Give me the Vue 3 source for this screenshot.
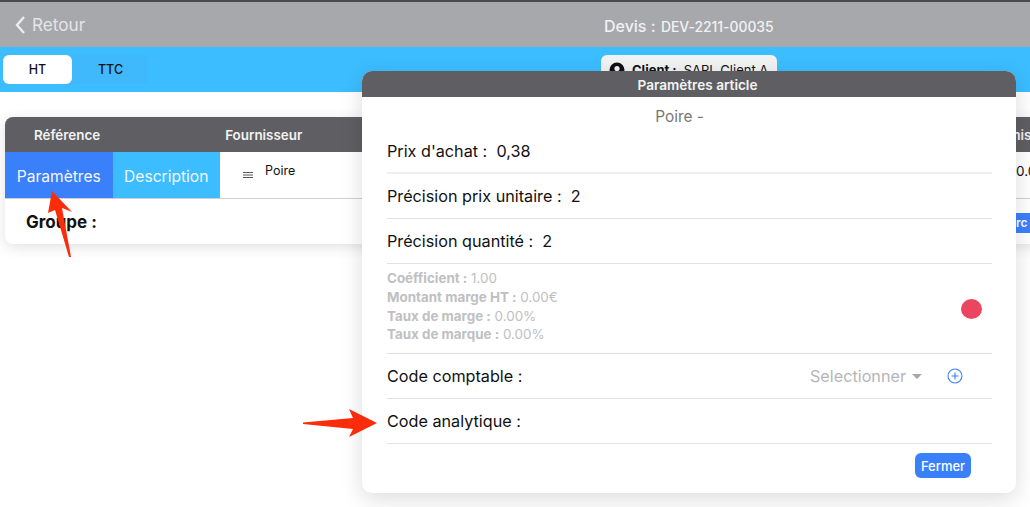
<template>
  <div class="page">
    <header class="nav">
      <div class="back">
        <svg width="12" height="20" viewBox="0 0 12 20"><path d="M10 2 L3 10 L10 18" fill="none" stroke="#eceded" stroke-width="2.4"/></svg>
        <span>Retour</span>
      </div>
      <div class="title">Devis : <small>DEV-2211-00035</small></div>
    </header>
    <div class="bar">
      <div class="toggle">
        <button class="seg on">HT</button>
        <button class="seg">TTC</button>
      </div>
      <div class="client">
        <svg width="16" height="18" viewBox="0 0 16 18"><circle cx="8" cy="8" r="7.5" fill="#111"/><circle cx="8" cy="6.5" r="2.6" fill="#f1f2f4"/></svg>
        <b>Client :</b> <span>SARL Client A</span>
      </div>
    </div>
    <section class="card">
      <div class="thead">
        <span class="th1">Référence</span>
        <span class="th2">Fournisseur</span>
        <span class="th3">Remis</span>
      </div>
      <div class="trow">
        <div class="tab blue">Paramètres</div>
        <div class="tab sky">Description</div>
        <div class="name">
          <svg width="10" height="6" viewBox="0 0 10 6"><path d="M0 .5h10M0 3h10M0 5.5h10" stroke="#555" stroke-width="1"/></svg>
          <span>Poire</span>
        </div>
        <span class="val">0.00</span>
      </div>
      <div class="group">
        <b>Groupe :</b>
        <span class="more">Marc</span>
      </div>
    </section>

    <div class="modal">
      <div class="mhead">Paramètres article</div>
      <div class="msub">Poire -</div>
      <div class="mbody">
        <div class="line">Prix d'achat :&nbsp; 0,38</div>
        <div class="line">Précision prix unitaire :&nbsp; 2</div>
        <div class="line">Précision quantité :&nbsp; 2</div>
        <div class="stats">
          <div class="nums">
            <p v-for="s in stats" :key="s[0]"><b>{{ s[0] }} :</b> {{ s[1] }}</p>
          </div>
          <i class="dot"></i>
        </div>
        <div class="line">
          <span>Code comptable :</span>
          <span class="select">Selectionner<i class="caret"></i></span>
          <svg class="plus" width="16" height="16" viewBox="0 0 16 16"><circle cx="8" cy="8" r="7" fill="none" stroke="#3a80f6" stroke-width="1.1"/><path d="M8 4.5v7M4.5 8h7" stroke="#3a80f6" stroke-width="1.1"/></svg>
        </div>
        <div class="line">Code analytique :</div>
      </div>
      <div class="mfoot"><button class="close">Fermer</button></div>
    </div>

    <svg class="arrow a1" width="30" height="70" viewBox="0 0 30 70"><path d="M7 1 L27 22 L17 18 L26 67 L24 67 L10 20 L3 23 Z" fill="#fb2c0a"/></svg>
    <svg class="arrow a2" width="76" height="30" viewBox="0 0 76 30"><path d="M75 15 L47 29 L51 21 L1 16 L1 14.5 L51 10 L47 1 Z" fill="#fb2c0a"/></svg>
  </div>
</template>

<script setup>
const stats = [
  ['Coéfficient', '1.00'],
  ['Montant marge HT', '0.00€'],
  ['Taux de marge', '0.00%'],
  ['Taux de marque', '0.00%'],
]
</script>

<style>
html, body { margin: 0; background: #fff; }
</style>

<style scoped>
.page { position: relative; width: 1030px; height: 507px; overflow: hidden; font-family: Inter, "Liberation Sans", sans-serif; font-feature-settings: "calt" 0; color: #111; background: #fff; }
.nav { height: 45px; border-top: 2px solid #4a4a4e; background: #a7a8ac; display: flex; align-items: center; position: relative; color: #f2f2f3; }
.back { display: flex; align-items: center; gap: 6px; padding-left: 14px; font-size: 17.2px; color: #e4e5e6; }
.title { position: absolute; left: 604px; top: 14px; font-size: 16px; font-weight: 500; white-space: nowrap; }
.title small { font-size: 13.9px; margin-left: 1px; }
.bar { height: 45px; background: #3bbdff; display: flex; align-items: center; position: relative; }
.toggle { display: flex; margin-left: 3px; background: #3fb9fb; border-radius: 6px; width: 145px; }
.seg { flex: none; width: 69px; height: 29px; border: 0; border-radius: 6px; background: transparent; font: 500 12.5px Inter, sans-serif; font-feature-settings: "calt" 0; color: #111; padding: 0; margin-right: 4px; }
.seg.on { background: #fff; }
.client { position: absolute; left: 601px; top: 8px; width: 176px; height: 30px; background: #f1f2f4; border-radius: 6px; display: flex; align-items: flex-start; gap: 7px; padding: 7px 8px; box-sizing: border-box; font-size: 13px; white-space: nowrap; }
.card { position: absolute; left: 5px; top: 117px; width: 1040px; height: 127px; border-radius: 8px; overflow: hidden; background: #fff; box-shadow: 0 3px 14px rgba(0,0,0,.12); }
.thead { height: 35px; background: #5f5f63; color: #f2f2f2; font-size: 13.4px; font-weight: 600; display: flex; align-items: center; position: relative; }
.th1 { margin-left: 29px; }
.th2 { margin-left: 125px; }
.th3 { position: absolute; left: 987px; }
.trow { display: flex; height: 46px; border-bottom: 1px solid #cfcfd2; position: relative; }
.tab { width: 107.5px; display: flex; align-items: center; justify-content: center; color: #f4f7ff; font-size: 15.6px; padding-top: 2px; box-sizing: border-box; }
.blue { background: #3a80fb; }
.sky { background: #3bbdff; }
.name { display: flex; align-items: flex-start; gap: 12px; padding: 11px 0 0 23px; font-size: 12.5px; }
.name svg { margin-top: 9px; }
.val { position: absolute; left: 1011px; top: 11px; font-size: 13.5px; }
.group { font-size: 17px; padding: 13px 0 0 21px; position: relative; }
.more { position: absolute; left: 990px; top: 14px; width: 60px; height: 20px; padding-left: 3px; box-sizing: border-box; background: #3a80fb; color: #fff; font-size: 12px; font-weight: 600; line-height: 20px; }
.modal { position: absolute; left: 362px; top: 71px; width: 654px; height: 422px; background: #fff; border-radius: 10px; overflow: hidden; box-shadow: 0 6px 22px rgba(0,0,0,.14); }
.mhead { height: 26px; background: #5f5f63; color: #f4f4f4; text-align: center; font-size: 13.6px; font-weight: 600; line-height: 28px; padding-left: 17px; }
.msub { height: 32px; line-height: 40px; text-align: center; color: #777; font-size: 15.4px; padding-right: 19px; }
.mbody { margin: 0 24px 0 25px; }
.line { height: 45px; display: flex; align-items: center; border-bottom: 1px solid #e2e2e4; font-size: 16.2px; white-space: pre; box-sizing: border-box; color: #111; }
.line:first-child { border-bottom-width: 2px; border-color: #efefef; }
.stats { height: 90px; display: flex; align-items: center; justify-content: space-between; border-bottom: 1px solid #dfdfe1; box-sizing: border-box; padding-right: 10px; }
.nums { margin-top: -4px; }
.nums p { margin: 0; height: 18.7px; line-height: 18.7px; font-size: 13.4px; color: #c0c0c2; }
.dot { width: 21px; height: 20px; border-radius: 50%; background: #ec4560; }
.select { margin-left: auto; color: #b5b5b8; font-size: 16.2px; display: flex; align-items: center; gap: 6px; }
.caret { border: 5px solid transparent; border-top: 5px solid #a8a8ab; border-bottom: 0; }
.plus { margin: 0 29px 0 25px; }
.mfoot { display: flex; justify-content: flex-end; padding: 9px 45px 0 0; }
.close { width: 56px; height: 25px; border: 0; border-radius: 6px; background: #3a80fb; color: #fff; font: 500 13px Inter, sans-serif; padding: 0; }
.arrow { position: absolute; }
.a1 { left: 45px; top: 190px; }
.a2 { left: 302px; top: 408px; }
</style>
